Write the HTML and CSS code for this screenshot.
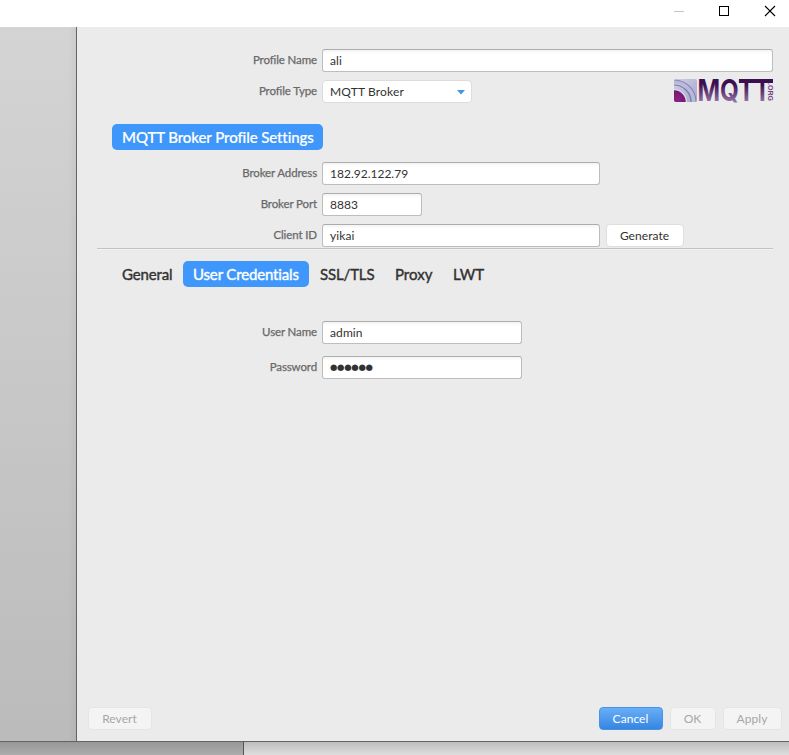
FILE: index.html
```
<!DOCTYPE html>
<html lang="en">
<head>
<meta charset="utf-8">
<title>Edit Connection Profiles</title>
<link rel="stylesheet" href="styles.css">
</head>
<body>
<header class="titlebar">
  <svg class="window-icons" width="120" height="27" viewBox="0 0 120 27" shape-rendering="crispEdges">
    <path d="M5 11.5H15" stroke="#c4c4c4"/>
    <rect x="50.5" y="6.5" width="9" height="9" fill="none" stroke="#000"/>
    <path d="M96 6L106 16M106 6L96 16" stroke="#000" stroke-width="1.1" shape-rendering="auto"/>
  </svg>
</header>
<main class="workspace">
  <aside class="sidebar"></aside>
  <section class="panel">
    <div class="row row-name"><label class="label">Profile Name</label><div class="field wide">ali</div></div>
    <div class="row row-type">
      <label class="label">Profile Type</label>
      <div class="select"><span class="select-text">MQTT Broker</span><svg class="arrow" width="8" height="5" viewBox="0 0 8 5"><path d="M0 0H8L4 4.5Z" fill="#3f97ec"/></svg></div>
      <svg class="logo" width="102" height="38" viewBox="0 -6 102 38">
        <defs>
          <linearGradient id="ink" gradientUnits="userSpaceOnUse" x1="0" y1="1" x2="0" y2="24"><stop offset="0.25" stop-color="#3c0f50"/><stop offset="1" stop-color="#9674a6"/></linearGradient>
          <linearGradient id="tile" x1="0" y1="0" x2="1" y2="1"><stop offset="0" stop-color="#d2d0e4"/><stop offset="1" stop-color="#a6a5cf"/></linearGradient>
          <radialGradient id="core" gradientUnits="userSpaceOnUse" cx="5" cy="21" r="10"><stop offset="0" stop-color="#8e2087"/><stop offset="1" stop-color="#681968"/></radialGradient>
          <clipPath id="tile-clip"><rect x="1" y="1" width="23" height="23" rx="2"/></clipPath>
        </defs>
        <g clip-path="url(#tile-clip)">
          <rect x="1" y="1" width="23" height="23" fill="url(#tile)"/>
          <circle cx="1" cy="24" r="20" fill="none" stroke="#b9b9da" stroke-width="3"/>
          <circle cx="1" cy="24" r="22" fill="none" stroke="#8386b7" stroke-width="1.2"/>
          <circle cx="1" cy="24" r="17" fill="none" stroke="#7679ac" stroke-width="1.2"/>
          <circle cx="1" cy="24" r="13" fill="#dedced"/>
          <circle cx="1" cy="24" r="11.7" fill="url(#core)"/>
        </g>
        <rect x="66" y="1" width="34" height="4" fill="url(#ink)"/>
        <text class="logo-word" x="24.5" y="23" fill="url(#ink)" textLength="73" lengthAdjust="spacingAndGlyphs">MQTT</text>
        <text class="logo-org" transform="translate(95 5) rotate(90)" textLength="18" lengthAdjust="spacingAndGlyphs">.ORG</text>
      </svg>
    </div>
    <h1 class="pill heading">MQTT Broker Profile Settings</h1>
    <div class="row row-address"><label class="label">Broker Address</label><div class="field medium digits">182.92.122.79</div></div>
    <div class="row row-port"><label class="label">Broker Port</label><div class="field short digits">8883</div></div>
    <div class="row row-client"><label class="label">Client ID</label><div class="field medium">yikai</div><button class="button generate">Generate</button></div>
    <div class="divider"></div>
    <nav class="tabs">
      <span class="tab general">General</span><span class="pill tab active">User Credentials</span><span class="tab ssl">SSL/TLS</span><span class="tab proxy">Proxy</span><span class="tab lwt">LWT</span>
    </nav>
    <div class="row row-user"><label class="label">User Name</label><div class="field credential">admin</div></div>
    <div class="row row-password"><label class="label">Password</label><div class="field credential dots">●●●●●●</div></div>
    <footer class="actions">
      <button class="button disabled revert">Revert</button>
      <button class="button primary cancel">Cancel</button>
      <button class="button disabled ok">OK</button>
      <button class="button disabled apply">Apply</button>
    </footer>
  </section>
</main>
<div class="behind"><div class="behind-left"></div><div class="behind-right"></div></div>
</body>
</html>
```
FILE: styles.css
```
* { box-sizing: border-box; }
body {
  margin: 0;
  height: 755px;
  overflow: hidden;
  display: flex;
  flex-direction: column;
  background: #fff;
  color: #323232;
  font: 12px/20px Lato, sans-serif;
}
.titlebar { height: 27px; flex: none; display: flex; justify-content: flex-end; }
.window-icons { display: block; width: 120px; }
.workspace { height: 715px; flex: none; display: flex; border-bottom: 1px solid #646464; }
.sidebar {
  width: 77px;
  border-right: 1px solid #646464;
  background: linear-gradient(to right, transparent 68px, rgba(0, 0, 0, .04)), linear-gradient(#d4d4d4, #bbb);
}
.panel { width: 712px; background: #ebebeb; display: flex; flex-direction: column; align-items: flex-start; }
.row { display: flex; height: 23px; flex: none; }
.label {
  width: 240px;
  margin-right: 5px;
  text-align: right;
  font-size: 11.5px;
  line-height: 21px;
  color: #696969;
  -webkit-text-stroke: .25px #696969;
  white-space: nowrap;
  letter-spacing: -.12px;
}
.field, .select {
  height: 23px;
  border: 1px solid #bdbdbd;
  border-top-color: #acacac;
  border-radius: 3px;
  background: linear-gradient(#f4f4f4, #fff 4px);
  padding-left: 7px;
  line-height: 22px;
  letter-spacing: .1px;
  white-space: nowrap;
}
.digits { letter-spacing: 0; }
.wide { width: 451px; }
.medium { width: 278px; }
.short { width: 100px; }
.credential { width: 200px; }
.select {
  width: 150px;
  border-color: #dcdcdc;
  border-radius: 4px;
  background: #fff;
  display: flex;
  align-items: center;
  justify-content: space-between;
  padding-right: 6px;
}
.select-text { letter-spacing: .15px; }
.arrow { margin-top: 2px; }
.row-name { margin-top: 22px; }
.row-type { margin-top: 8px; }
.logo { display: block; flex: none; margin: -8px 0 0 201px; }
.logo-word { font: 700 30px Inter, "Liberation Sans", sans-serif; }
.logo-org { font: bold 6.5px "Liberation Sans", sans-serif; fill: #714482; }
.pill {
  height: 26px;
  background: #3f97fc;
  border-radius: 5px;
  color: #fff;
}
.heading {
  width: 211px;
  margin: 21px 0 0 35px;
  padding-left: 10px;
  font-size: 15px;
  font-weight: 500;
  line-height: 27px;
  letter-spacing: -.09px;
  white-space: nowrap;
  -webkit-text-stroke: .2px #fff;
}
.row-address { margin-top: 12px; }
.row-port, .row-client { margin-top: 8px; }
.divider { width: 676px; height: 2px; flex: none; margin: 1px 0 0 20px; background: #c2c2c2; border-bottom: 1px solid #f3f3f3; }
.tabs { display: flex; margin: 11px 0 0 45px; height: 26px; flex: none; }
.tab {
  font-size: 15px;
  line-height: 27px;
  letter-spacing: -.15px;
  white-space: nowrap;
  -webkit-text-stroke: .4px currentColor;
}
.general { width: 61px; }
.active { width: 126px; padding-left: 10px; margin-right: 11px; }
.ssl { width: 75px; }
.proxy { width: 58px; }
.proxy, .lwt { letter-spacing: 0; }
.row-user { margin-top: 34px; }
.row-password { margin-top: 12px; }
.dots { font: 8.5px/20px "DejaVu Sans", sans-serif; letter-spacing: -.3px; }
.button {
  height: 23px;
  padding: 0 1px 0 0;
  border: 1px solid #dfdfdf;
  border-radius: 4px;
  background: #fff;
  color: #323232;
  font: 12px/20px Lato, sans-serif;
  letter-spacing: .05px;
}
.generate { width: 78px; margin-left: 6px; }
.actions { display: flex; width: 100%; margin-top: auto; padding: 0 7px 10px 11px; height: 34px; flex: none; }
.disabled { background: #f4f4f4; border-color: #e5e5e5; color: #a7a7a7; }
.primary { background: linear-gradient(#69aef8, #3586e0); border-color: #4792e6; color: #fff; }
.revert { width: 64px; }
.cancel { width: 64px; margin-left: auto; }
.ok { width: 46px; margin-left: 7px; }
.apply { width: 59px; margin-left: 7px; }
.behind { height: 13px; display: flex; }
.behind-left { width: 244px; border-right: 1px solid #555; background: linear-gradient(#979797, #adadad); }
.behind-right { flex: 1; background: linear-gradient(#bdbdbd, #dedede); }
```
